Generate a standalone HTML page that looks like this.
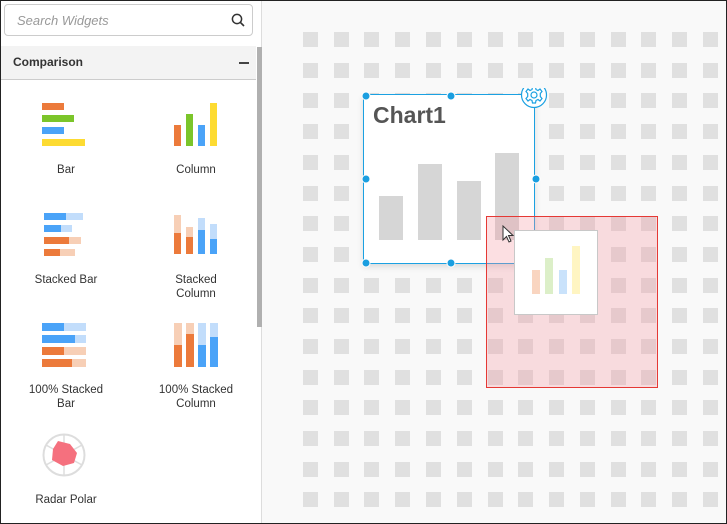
<!DOCTYPE html>
<html><head><style>
body{margin:0;width:727px;height:524px;overflow:hidden;font-family:"Liberation Sans",sans-serif;}
.wrap{position:absolute;left:0;top:0;width:725px;height:522px;border:1px solid #222;background:#f9f9f9;overflow:hidden}
.side{position:absolute;left:0;top:0;width:260px;height:522px;background:#fff;border-right:1px solid #ddd}
.search{position:absolute;left:3px;top:3px;width:247px;height:30px;border:1px solid #ccc;border-radius:4px;background:#fff}
.search span{position:absolute;left:12px;top:8px;font-size:13px;font-style:italic;color:#999}
.hdr{position:absolute;left:0;top:45px;width:255px;height:33px;background:#f3f3f3;border-bottom:1px solid #ccc}
.hdr b{position:absolute;left:12px;top:9px;font-size:12px;color:#333}
.hdr i{position:absolute;left:238px;top:16px;width:10px;height:1.5px;background:#444}
.scroll{position:absolute;left:256px;top:46px;width:5px;height:280px;background:#b0b0b0}
.lbl{position:absolute;width:130px;text-align:center;font-size:11.5px;color:#333;line-height:14px}
.abs{position:absolute}
</style></head><body><div class="wrap">
<svg class="abs" style="left:0;top:0" width="725" height="522">
<defs><g id="r" fill="#e0e0e0"><rect x="302" width="15" height="15"/><rect x="333" width="15" height="15"/><rect x="363" width="15" height="15"/><rect x="394" width="15" height="15"/><rect x="425" width="15" height="15"/><rect x="456" width="15" height="15"/><rect x="487" width="15" height="15"/><rect x="517" width="15" height="15"/><rect x="548" width="15" height="15"/><rect x="579" width="15" height="15"/><rect x="610" width="15" height="15"/><rect x="640" width="15" height="15"/><rect x="671" width="15" height="15"/><rect x="702" width="15" height="15"/></g></defs>
<use href="#r" y="31"/><use href="#r" y="62"/><use href="#r" y="92"/><use href="#r" y="123"/><use href="#r" y="154"/><use href="#r" y="185"/><use href="#r" y="215"/><use href="#r" y="246"/><use href="#r" y="277"/><use href="#r" y="307"/><use href="#r" y="338"/><use href="#r" y="369"/><use href="#r" y="399"/><use href="#r" y="430"/><use href="#r" y="461"/><use href="#r" y="491"/>
</svg>
<div class="side">
<div class="search"><span>Search Widgets</span>
<svg class="abs" style="left:226px;top:8px" width="14" height="14"><circle cx="6" cy="6" r="4.6" fill="none" stroke="#333" stroke-width="1.5"/><line x1="9.4" y1="9.4" x2="13" y2="13" stroke="#333" stroke-width="1.6"/></svg></div>
<div class="hdr"><b>Comparison</b><i></i></div>
<div class="scroll"></div>
<svg class="abs" style="left:0;top:0" width="255" height="522">
<rect x="41" y="102" width="22" height="7" fill="#ec7a3b"/><rect x="41" y="114" width="32" height="7" fill="#7bc52a"/><rect x="41" y="126" width="22" height="7" fill="#4aa3f8"/><rect x="41" y="138" width="43" height="7" fill="#fddb32"/>
<rect x="173" y="124" width="7" height="21" fill="#ec7a3b"/><rect x="185" y="113" width="7" height="32" fill="#7bc52a"/><rect x="197" y="124" width="7" height="21" fill="#4aa3f8"/><rect x="209" y="102" width="7" height="43" fill="#fddb32"/>
<g><rect x="43" y="212" width="22" height="7" fill="#4aa3f8"/><rect x="65" y="212" width="17" height="7" fill="#c2ddfb"/>
<rect x="43" y="224" width="17" height="7" fill="#4aa3f8"/><rect x="60" y="224" width="11" height="7" fill="#c2ddfb"/>
<rect x="43" y="236" width="25" height="7" fill="#ec7a3b"/><rect x="68" y="236" width="12" height="7" fill="#f7cfb6"/>
<rect x="43" y="248" width="16" height="7" fill="#ec7a3b"/><rect x="59" y="248" width="15" height="7" fill="#f7cfb6"/></g>
<g><rect x="173" y="214" width="7" height="18" fill="#f7cfb6"/><rect x="173" y="232" width="7" height="21" fill="#ec7a3b"/>
<rect x="185" y="226" width="7" height="10" fill="#f7cfb6"/><rect x="185" y="236" width="7" height="17" fill="#ec7a3b"/>
<rect x="197" y="217" width="7" height="12" fill="#c2ddfb"/><rect x="197" y="229" width="7" height="24" fill="#4aa3f8"/>
<rect x="209" y="223" width="7" height="15" fill="#c2ddfb"/><rect x="209" y="238" width="7" height="15" fill="#4aa3f8"/></g>
<g><rect x="41" y="322" width="22" height="8" fill="#4aa3f8"/><rect x="63" y="322" width="22" height="8" fill="#c2ddfb"/>
<rect x="41" y="334" width="33" height="8" fill="#4aa3f8"/><rect x="74" y="334" width="11" height="8" fill="#c2ddfb"/>
<rect x="41" y="346" width="22" height="8" fill="#ec7a3b"/><rect x="63" y="346" width="22" height="8" fill="#f7cfb6"/>
<rect x="41" y="358" width="30" height="8" fill="#ec7a3b"/><rect x="71" y="358" width="14" height="8" fill="#f7cfb6"/></g>
<g><rect x="173" y="322" width="8" height="22" fill="#f7cfb6"/><rect x="173" y="344" width="8" height="22" fill="#ec7a3b"/>
<rect x="185" y="322" width="8" height="11" fill="#f7cfb6"/><rect x="185" y="333" width="8" height="33" fill="#ec7a3b"/>
<rect x="197" y="322" width="8" height="22" fill="#c2ddfb"/><rect x="197" y="344" width="8" height="22" fill="#4aa3f8"/>
<rect x="209" y="322" width="8" height="14" fill="#c2ddfb"/><rect x="209" y="336" width="8" height="30" fill="#4aa3f8"/></g>
<circle cx="63" cy="454" r="20.5" fill="none" stroke="#ddd" stroke-width="2"/>
<g stroke="#ddd" stroke-width="1.5"><line x1="63" y1="434" x2="63" y2="474"/><line x1="45" y1="444" x2="81" y2="464"/><line x1="45" y1="464" x2="81" y2="444"/></g>
<polygon points="57,440 69,443 76,452 73,462 62,465 51,459 52,448" fill="#f5707e"/>
</svg>
<div class="lbl" style="left:0;top:162px">Bar</div>
<div class="lbl" style="left:130px;top:162px">Column</div>
<div class="lbl" style="left:0;top:272px">Stacked Bar</div>
<div class="lbl" style="left:130px;top:272px">Stacked<br>Column</div>
<div class="lbl" style="left:0;top:382px">100% Stacked<br>Bar</div>
<div class="lbl" style="left:130px;top:382px">100% Stacked<br>Column</div>
<div class="lbl" style="left:0;top:492px">Radar Polar</div>
</div>
<div class="abs" style="left:362px;top:93px;width:170px;height:168px;background:#fff;border:1px solid #1ba1e2;box-shadow:0 3px 6px rgba(0,0,0,.12)">
<div class="abs" style="left:9px;top:7px;font-size:23px;font-weight:bold;color:#555">Chart1</div>
<div class="abs" style="left:15px;top:101px;width:24px;height:44px;background:#d6d6d6"></div>
<div class="abs" style="left:54px;top:69px;width:24px;height:76px;background:#d6d6d6"></div>
<div class="abs" style="left:93px;top:86px;width:24px;height:59px;background:#d6d6d6"></div>
<div class="abs" style="left:131px;top:58px;width:24px;height:87px;background:#d6d6d6"></div>
</div>
<svg class="abs" style="left:357px;top:87px" width="200" height="182">
<g fill="#1a9ee0" stroke="#fff" stroke-width="1"><circle cx="8" cy="8" r="4"/><circle cx="93" cy="8" r="4"/><circle cx="8" cy="91" r="4"/><circle cx="178" cy="91" r="4"/><circle cx="8" cy="175" r="4"/><circle cx="93" cy="175" r="4"/></g>
<circle cx="176" cy="7" r="12.5" fill="#fff" stroke="#1ba1e2" stroke-width="1.2"/>
<g transform="translate(176,7)" fill="none" stroke="#1ba1e2" stroke-width="1.2"><circle r="3"/>
<path d="M-1.5,-8 L1.5,-8 L2,-5.5 L4,-4.5 L6,-6 L8,-3.5 L6.3,-1.5 L6.3,1.5 L8,3.5 L6,6 L4,4.5 L2,5.5 L1.5,8 L-1.5,8 L-2,5.5 L-4,4.5 L-6,6 L-8,3.5 L-6.3,1.5 L-6.3,-1.5 L-8,-3.5 L-6,-6 L-4,-4.5 L-2,-5.5 Z"/></g>
</svg>
<div class="abs" style="left:485px;top:215px;width:170px;height:170px;border:1px solid #e53935;background:rgba(245,150,160,.3)"></div>
<div class="abs" style="left:513px;top:229px;width:82px;height:83px;background:#fff;border:1px solid #c8c8c8">
<div class="abs" style="left:17px;top:39px;width:8px;height:24px;background:#f9d5c0"></div>
<div class="abs" style="left:30px;top:27px;width:8px;height:36px;background:#dcefc8"></div>
<div class="abs" style="left:44px;top:39px;width:8px;height:24px;background:#c9e2fb"></div>
<div class="abs" style="left:57px;top:15px;width:8px;height:48px;background:#fff5c2"></div>
</div>
<svg class="abs" style="left:501px;top:224px" width="14" height="20"><path d="M1,1 L1,15 L4.5,11.5 L7,17 L9,16 L6.5,10.5 L11,10.5 Z" fill="#fff" stroke="#333" stroke-width="1"/></svg>
</div></body></html>
